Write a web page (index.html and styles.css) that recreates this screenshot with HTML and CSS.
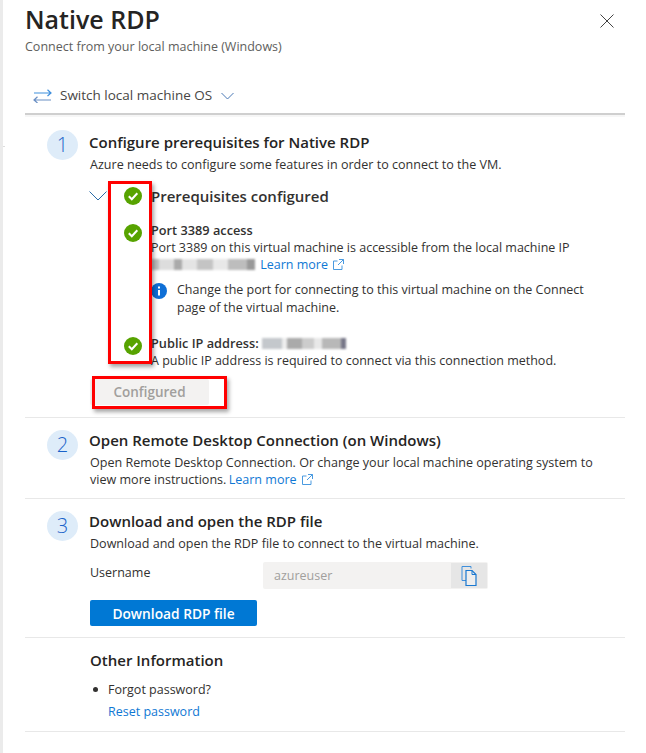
FILE: index.html
```html
<!DOCTYPE html>
<html lang="en">
<head>
<meta charset="utf-8">
<title>Native RDP</title>
<link rel="stylesheet" href="styles.css">
</head>
<body>
<div class="page">
  <div class="stub-line"></div>
  <main class="panel">
    <header class="head">
      <div>
        <h1>Native RDP</h1>
        <p class="sub">Connect from your local machine (Windows)</p>
      </div>
      <svg class="close" width="14" height="14" viewBox="0 0 14 14"><path d="M.5.5l13 13M13.500.5l-13 13" fill="none" stroke="#444" stroke-width="1"/></svg>
    </header>
    <div class="switch">
      <svg width="19" height="14" viewBox="0 0 19 14"><path d="M1 4h17M14.500.8L18 4l-3.500 3" fill="none" stroke="#3f8fdc" stroke-width="1.200"/><path d="M18 11H1M4.500 7.800L1 11l3.500 3" fill="none" stroke="#6a8fc4" stroke-width="1.200"/></svg>
      <span>Switch local machine OS</span>
      <svg width="13" height="8" viewBox="0 0 13 8"><path d="M.5 1l6 6 6-6" fill="none" stroke="#4a78b5" stroke-width="1"/></svg>
    </div>

    <section class="step step-one">
      <div class="num">1</div>
      <div class="body">
        <h2>Configure prerequisites for Native RDP</h2>
        <p class="desc">Azure needs to configure some features in order to connect to the VM.</p>
        <div class="prereq">
          <svg class="chev" width="18" height="10" viewBox="0 0 18 10"><path d="M.5.500L9 9 17.500.5" fill="none" stroke="#2b6ca8" stroke-width="1"/></svg>
          <svg class="check" viewBox="0 0 18 18"><circle cx="9" cy="9" r="9" fill="#57a300"/><path d="M4.800 9.300l3 3 5.500-6" fill="none" stroke="#fff" stroke-width="2"/></svg>
          <h3>Prerequisites configured</h3>
        </div>
        <div class="item item-port">
          <svg class="check" viewBox="0 0 18 18"><circle cx="9" cy="9" r="9" fill="#57a300"/><path d="M4.800 9.300l3 3 5.500-6" fill="none" stroke="#fff" stroke-width="2"/></svg>
          <div class="item-text">
            <h4>Port 3389 access</h4>
            <p>Port 3389 on this virtual machine is accessible from the local machine IP</p>
            <p><span class="blur blur-ip"></span> <a href="#">Learn more <svg class="ext" width="11" height="11" viewBox="0 0 11 11"><path d="M4.500 2H.5v8.500H9V6.500M6 .5h4.500V5M10.500.5L5 6" fill="none" stroke="#4a9ae0" stroke-width="1"/></svg></a></p>
            <div class="note">
              <svg width="16" height="16" viewBox="0 0 16 16"><circle cx="8" cy="8" r="8" fill="#0f6fd6"/><rect x="7" y="7" width="2" height="5.500" fill="#fff"/><rect x="7" y="3.500" width="2" height="2" fill="#fff"/></svg>
              <p>Change the port for connecting to this virtual machine on the Connect<br>page of the virtual machine.</p>
            </div>
          </div>
        </div>
        <div class="item item-ip">
          <svg class="check" viewBox="0 0 18 18"><circle cx="9" cy="9" r="9" fill="#57a300"/><path d="M4.800 9.300l3 3 5.500-6" fill="none" stroke="#fff" stroke-width="2"/></svg>
          <div class="item-text">
            <h4>Public IP address: <span class="blur blur-pub"></span></h4>
            <p>A public IP address is required to connect via this connection method.</p>
          </div>
        </div>
        <button class="btn-disabled">Configured</button>
      </div>
    </section>

    <section class="step step-two">
      <div class="num">2</div>
      <div class="body">
        <h2>Open Remote Desktop Connection (on Windows)</h2>
        <p class="desc">Open Remote Desktop Connection. Or change your local machine operating system to<br>view more instructions. <a href="#" class="more">Learn more <svg class="ext" width="11" height="11" viewBox="0 0 11 11"><path d="M4.500 2H.5v8.500H9V6.500M6 .5h4.500V5M10.500.5L5 6" fill="none" stroke="#4a9ae0" stroke-width="1"/></svg></a></p>
      </div>
    </section>

    <section class="step step-three">
      <div class="num">3</div>
      <div class="body">
        <h2>Download and open the RDP file</h2>
        <p class="desc">Download and open the RDP file to connect to the virtual machine.</p>
        <div class="field">
          <label>Username</label>
          <div class="input-wrap">
            <span class="input">azureuser</span>
            <span class="copy"><svg width="16" height="20" viewBox="0 0 16 20"><path d="M10 2.500V.5H1v14h4" fill="none" stroke="#3f8fdc" stroke-width="1"/><path d="M5 4.500h6l4 4v11H5z" fill="#eee" stroke="#1a78d0" stroke-width="1.200"/><path d="M11 4.500v4h4" fill="none" stroke="#1a78d0" stroke-width="1"/></svg></span>
          </div>
        </div>
        <button class="btn-primary">Download RDP file</button>
      </div>
    </section>

    <section class="other">
      <h2>Other Information</h2>
      <ul>
        <li>Forgot password?<br><a href="#">Reset password</a></li>
      </ul>
    </section>
  </main>
  <div class="mark mark-a"></div>
  <div class="mark mark-b"></div>
</div>
</body>
</html>
```
FILE: styles.css
```css
* { box-sizing: border-box; }
html, body { margin: 0; padding: 0; background: #fff; }
body {
  font-family: "Open Sans", "Noto Sans", "Liberation Sans", sans-serif;
  font-size: 12.500px;
  line-height: 17px;
  color: #323130;
  overflow: hidden;
}
.page {
  position: relative;
  width: 646px;
  height: 753px;
  overflow: hidden;
  border-left: 3px solid #ebebeb;
}
.stub-line {
  position: absolute;
  left: -3px;
  top: 146px;
  width: 5px;
  height: 1px;
  background: #ddd;
}
.panel { width: 622px; padding-left: 22px; }
h1, h2, h3, h4, p, ul { margin: 0; padding: 0; }
a { color: #0f78d4; text-decoration: none; }

.head { display: flex; justify-content: space-between; height: 59px; padding: 4px 11px 0 0; }
h1 { font-size: 25px; line-height: 30px; font-weight: 600; color: #252423; }
.sub { color: #605e5c; font-size: 12.500px; line-height: 18px; margin-top: 4px; }
.close { margin: 10px 0 0; flex: none; }

.switch {
  display: flex;
  align-items: center;
  gap: 8px;
  height: 56px;
  padding: 19px 0 0 8px;
  border-bottom: 2px solid #cfcfcf;
  box-shadow: 0 2px 0 #f6f6f6;
  font-size: 13.500px;
  color: #484644;
}
.switch svg:last-child { margin-left: 1px; }

.step { display: flex; border-bottom: 1px solid #e8e8e8; padding-left: 22px; }
.num {
  flex: none;
  width: 31px;
  height: 30px;
  margin-top: 12px;
  border-radius: 50%;
  background: #deecf9;
  color: #1a62c9;
  font-size: 20px;
  line-height: 30px;
  text-align: center;
  font-weight: 300;
}
.step-one .num { margin-top: 15px; }
.body { margin-left: 11px; padding-top: 12px; flex: 1; }
.step-one .body { padding-top: 17px; }
h2 { font-size: 15px; line-height: 20px; font-weight: 600; color: #252423; }
.desc { margin: 4px 0 0 1px; font-size: 12.550px; }
.step-one { height: 303px; }
.step-two { height: 81px; }
.step-three { height: 139px; }

.prereq { display: flex; align-items: center; position: relative; height: 22px; margin-top: 13px; }
.chev { position: absolute; left: 0; top: 5px; }
.check { position: absolute; width: 18px; height: 18px; left: 35px; top: 1px; }
h3 { margin-left: 62px; font-size: 15px; line-height: 20px; font-weight: 600; color: #323130; position: relative; top: -1px; }

.item { position: relative; margin-left: 62px; }
.item .check { left: -27px; }
.item-port { margin-top: 14px; height: 104px; }
.item-port .check { top: 2px; }
.item-ip { margin-top: 9px; height: 34px; }
.item-ip .check { top: 2px; }
h4 { font-size: 12.750px; line-height: 17px; font-weight: 600; color: #323130; }
.blur { display: inline-block; height: 11px; vertical-align: -1px; filter: blur(1px); }
.blur-ip { width: 104px; background: linear-gradient(90deg,#bbb 0 8%,#ddd 8% 22%,#aaa 22% 30%,#e4e4e4 30% 44%,#c4c4c4 44% 60%,#e8e8e8 60% 74%,#bdbdbd 74% 92%,#999 92%); margin-right: 2px; }
.blur-pub { width: 84px; background: linear-gradient(90deg,#c4c8cc 0 24%,#eee 24% 30%,#aaa 30% 48%,#ccc 48% 62%,#e8e8e8 62% 72%,#b8b8b8 72% 94%,#778 94%); }
.ext { vertical-align: -1px; margin-left: 2px; }
.note { display: flex; gap: 10px; margin-top: 8px; line-height: 18px; }
.note svg { flex: none; margin-top: 2px; }

.btn-disabled {
  display: block;
  width: 119px;
  height: 26px;
  margin: 10px 0 0 1px;
  background: #f3f2f1;
  border: 0;
  border-radius: 2px;
  font: 600 13.500px "Open Sans", sans-serif;
  color: #a19f9d;
}
.more { margin-left: -1px; }

.field { display: flex; margin: 10px 0 0 1px; align-items: flex-start; }
label { width: 173px; line-height: 20px; padding-top: 1px; }
.input-wrap { display: flex; width: 225px; height: 27px; background: #f3f2f1; border-radius: 2px; }
.input { flex: 1; padding-left: 11px; line-height: 27px; color: #a19f9d; }
.copy { display: flex; align-items: center; justify-content: center; width: 36px; margin: 1px; background: #e6e6e6; }
.btn-primary {
  display: block;
  width: 167px;
  height: 26px;
  margin: 11px 0 0 1px;
  background: #0078d4;
  border: 0;
  border-radius: 2px;
  color: #fff;
  font: 600 13.750px "Open Sans", sans-serif;
}

.other { padding: 12px 0 0 65px; height: 94px; border-bottom: 1px solid #e8e8e8; }
.other ul { list-style: none; margin-top: 9px; }
.other li { position: relative; padding-left: 18px; line-height: 22px; }
.other li::before {
  content: "";
  position: absolute;
  left: 3px;
  top: 8px;
  width: 5px;
  height: 5px;
  border-radius: 50%;
  background: #323130;
}

.mark { position: absolute; border: 3px solid #f00; box-shadow: 2px 3px 4px rgba(0,0,0,.35); }
.mark-a { left: 105px; top: 181px; width: 44px; height: 183px; }
.mark-b { left: 89px; top: 376px; width: 135px; height: 33px; }
```
